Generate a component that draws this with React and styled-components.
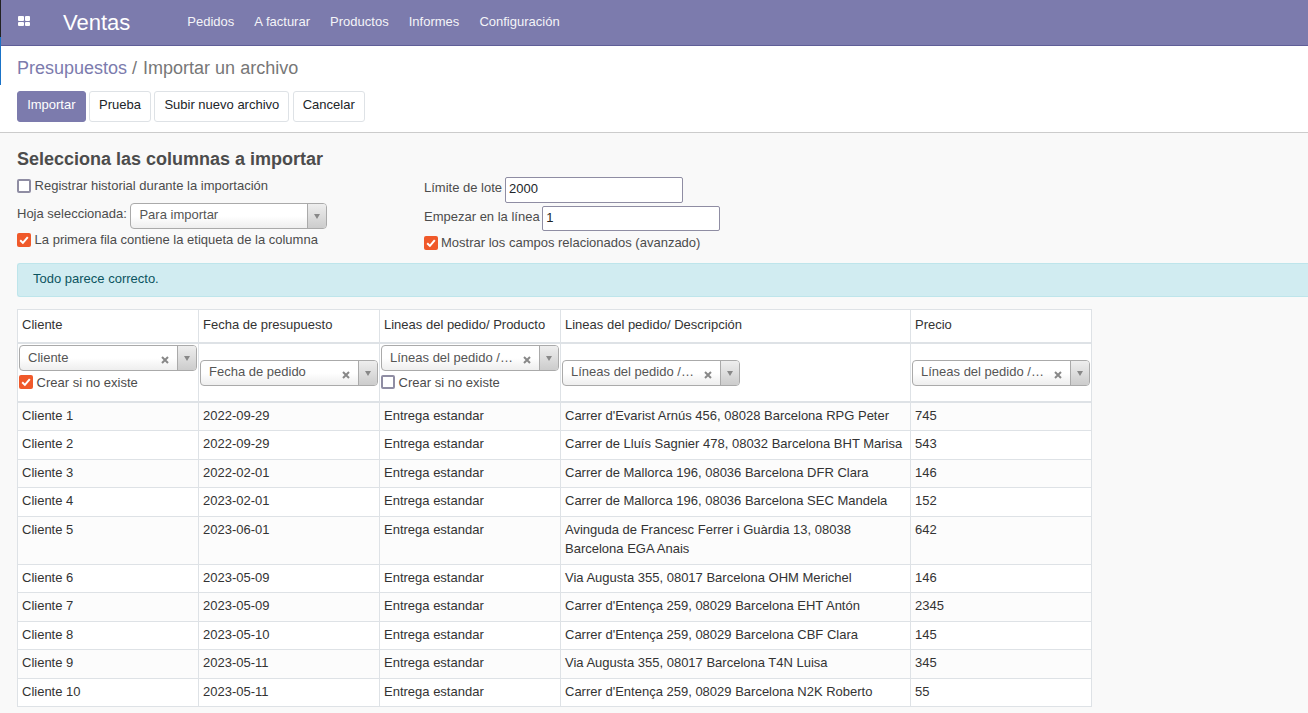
import React from "react";
import styled, { createGlobalStyle, css } from "styled-components";

const Global = createGlobalStyle`
  html, body { margin: 0; padding: 0; height: 100%; overflow: hidden; }
  body { font-family: "Liberation Sans", Roboto, sans-serif; font-size: 13px; line-height: 19.5px; color: #4c4c4c; background: #f9f9f9; }
  #root { height: 100%; }
`;

const Page = styled.div`
  height: 713px; width: 1308px; overflow: hidden; position: relative;
`;
const EdgeMark = styled.div`
  position: absolute; left: 0; top: 37px; width: 1px; height: 48px; background: #1a73c8; z-index: 3;
`;
const EdgeDark = styled.div`
  position: absolute; left: 0; top: 0; width: 1px; height: 37px; background: #222; z-index: 3;
`;
const Navbar = styled.nav`
  height: 45px; background: #7c7bad; border-bottom: 1px solid #5f5e97; display: flex; align-items: center; color: #fff; box-sizing: content-box;
`;
const AppsButton = styled.div`
  width: 12px; height: 10px; margin-left: 18px; display: grid; grid-template-columns: 5.5px 5.5px; grid-auto-rows: 4.5px; gap: 1px; margin-top: -3px;
`;
const AppsCell = styled.span`
  background: #fff; border-radius: 1px;
`;
const Brand = styled.div`
  font-size: 22px; margin-left: 33px; margin-right: 57px; line-height: 43px; color: #fff;
`;
const NavLink = styled.a`
  font-size: 13px; color: #fff; opacity: .92; margin-right: 20.1px; margin-top: -2px;
`;
const ControlPanel = styled.div`
  background: #fff; height: 86px; border-bottom: 1px solid #ccc; padding: 0 17px; display: flex; flex-direction: column;
`;
const Breadcrumb = styled.div`
  font-size: 18px; line-height: 27px; margin-top: 9px; color: #777; display: flex;
`;
const Crumb = styled.span`
  color: ${p => (p.$link ? "#7c7bad" : "#777")};
`;
const CrumbSep = styled.span`
  color: #777; margin: 0 6px 0 5px;
`;
const Buttons = styled.div`
  display: flex; gap: 3.4px; margin-top: 9px;
`;
const Btn = styled.button`
  font: inherit; font-size: 13px; line-height: 19.5px; height: 31px; padding: 0 ${p => (p.$primary ? 9.15 : 9)}px 4px; border-radius: 3px; box-sizing: border-box;
  border: 1px solid ${p => (p.$primary ? "#7c7bad" : "#dee2e6")};
  background: ${p => (p.$primary ? "#7c7bad" : "#fff")};
  color: ${p => (p.$primary ? "#fff" : "#212529")};
`;
const Content = styled.div`
  padding: 0 0 0 17px;
`;
const Title = styled.h2`
  font-size: 18px; line-height: 20px; font-weight: 700; margin: 16px 0 0; color: #4c4c4c;
`;
const Options = styled.div`
  display: flex; height: 94px;
`;
const OptionsLeft = styled.div`
  width: 407px; display: flex; flex-direction: column; padding-top: 7px;
`;
const OptionsRight = styled.div`
  display: flex; flex-direction: column; padding-top: 6px;
`;
const CheckRow = styled.label`
  display: flex; align-items: center; gap: ${p => p.$gap ?? 3.6}px; height: ${p => p.$h || 20}px; color: #4c4c4c;
`;
const Box = styled.span`
  width: 14px; height: 14px; box-sizing: border-box; border-radius: 2px; display: inline-flex; align-items: center; justify-content: center; flex: none;
  border: ${p => (p.$on ? "none" : "2px solid #8f8da3")};
  background: ${p => (p.$on ? "#f0592a" : "#fff")};
`;
const FieldRow = styled.div`
  display: flex; align-items: center; gap: ${p => p.$gap ?? 3.6}px; height: ${p => p.$h}px; margin-top: ${p => p.$mt || 0}px;
`;
const FieldLabel = styled.span`
  padding-bottom: 4px;
`;
const TextInput = styled.input`
  font: inherit; color: #212529; width: 178px; height: ${p => p.$h || 26}px; box-sizing: border-box; border: 1px solid #8f8da3; border-radius: 2px; padding: 0 3px 3px; background: #fff; outline: none; margin: 0;
`;
const Alert = styled.div`
  height: 32px; box-sizing: content-box; background: #d1ecf1; border: 1px solid #bee5eb; border-right: none; border-radius: 3px 0 0 3px; color: #0c5460; line-height: 29px; padding-left: 15px;
`;
const Table = styled.table`
  border-collapse: collapse; margin-top: 12px; width: 1074px; table-layout: fixed; background: #fff; color: #333;
  td, th { border: 1px solid #dee2e6; padding: 3px 4px 5px; font-weight: 400; text-align: left; vertical-align: top; line-height: 19.5px; }
  tbody tr:nth-child(odd) { background: #fcfcfc; }
`;
const HeadCell = styled.th`
  && { height: 23.5px; padding: 3px 4px 5px; vertical-align: middle; border-bottom-width: 2px; }
`;
const Select = styled.div`
  display: flex; height: 26px; box-sizing: border-box; border: 1px solid #aaa; border-radius: 4px; background: linear-gradient(#fff 0%, #fff 50%, #eee 100%); width: ${p => p.$w ? p.$w + "px" : "100%"}; align-items: stretch; color: #4c4c4c; font-size: 13px;
`;
const SelectText = styled.span`
  flex: 1; margin-left: 8px; margin-right: 3px; line-height: 22px; white-space: nowrap; overflow: hidden; text-overflow: ellipsis; min-width: 0; color: #555;
`;
const MapCell = styled.td`
  && {
    height: ${p => (p.$top ? 54.5 : 53)}px; vertical-align: ${p => (p.$top ? "top" : "middle")};
    padding: ${p => (p.$top ? "1.5px 1px 1px" : "3px 1px 1px")}; border-bottom-width: 2px;
  }
  ${p => p.$top && css`${SelectText} { line-height: 24px; }`}
`;
const Clear = styled.span`
  width: 16px; display: flex; align-items: center; justify-content: center; flex: none; padding-top: 4px; margin-right: 2px;
`;
const Arrow = styled.span`
  width: 18px; flex: none; border-left: 1px solid #aaa; border-radius: 0 3px 3px 0; background: linear-gradient(#eee, #ccc); display: flex; align-items: center; justify-content: center; margin-left: 2px;
`;
const Tri = styled.i`
  width: 0; height: 0; border-left: 3px solid transparent; border-right: 3px solid transparent; border-top: 5px solid #888;
`;
const MapCreate = styled.label`
  display: flex; align-items: center; gap: 3.6px; height: 22.5px; color: #4c4c4c;
`;

const Check = ({ on }) => (
  <Box $on={on}>
    {on && (
      <svg width="10" height="10" viewBox="0 0 10 10">
        <path d="M1.2 5.2 L3.9 7.9 L8.8 2.2" fill="none" stroke="#fff" strokeWidth="2" />
      </svg>
    )}
  </Box>
);
const X = () => (
  <svg width="8" height="8" viewBox="0 0 8 8">
    <path d="M1 1 L7 7 M7 1 L1 7" stroke="#888" strokeWidth="2" fill="none" />
  </svg>
);
const FieldSelect = ({ label, clear = true, w }) => (
  <Select $w={w}>
    <SelectText>{label}</SelectText>
    {clear && <Clear><X /></Clear>}
    <Arrow><Tri /></Arrow>
  </Select>
);

const rows = [
  ["Cliente 1", "2022-09-29", "Carrer d'Evarist Arnús 456, 08028 Barcelona RPG Peter", "745"],
  ["Cliente 2", "2022-09-29", "Carrer de Lluís Sagnier 478, 08032 Barcelona BHT Marisa", "543"],
  ["Cliente 3", "2022-02-01", "Carrer de Mallorca 196, 08036 Barcelona DFR Clara", "146"],
  ["Cliente 4", "2023-02-01", "Carrer de Mallorca 196, 08036 Barcelona SEC Mandela", "152"],
  ["Cliente 5", "2023-06-01", "Avinguda de Francesc Ferrer i Guàrdia 13, 08038 Barcelona EGA Anais", "642"],
  ["Cliente 6", "2023-05-09", "Via Augusta 355, 08017 Barcelona OHM Merichel", "146"],
  ["Cliente 7", "2023-05-09", "Carrer d'Entença 259, 08029 Barcelona EHT Antón", "2345"],
  ["Cliente 8", "2023-05-10", "Carrer d'Entença 259, 08029 Barcelona CBF Clara", "145"],
  ["Cliente 9", "2023-05-11", "Via Augusta 355, 08017 Barcelona T4N Luisa", "345"],
  ["Cliente 10", "2023-05-11", "Carrer d'Entença 259, 08029 Barcelona N2K Roberto", "55"],
];

export default function App() {
  return (
    <Page>
      <Global />
      <EdgeDark />
      <EdgeMark />
      <Navbar>
        <AppsButton><AppsCell /><AppsCell /><AppsCell /><AppsCell /></AppsButton>
        <Brand>Ventas</Brand>
        {["Pedidos", "A facturar", "Productos", "Informes", "Configuración"].map(n => <NavLink key={n}>{n}</NavLink>)}
      </Navbar>
      <ControlPanel>
        <Breadcrumb><Crumb $link>Presupuestos</Crumb><CrumbSep>/</CrumbSep><Crumb>Importar un archivo</Crumb></Breadcrumb>
        <Buttons>
          <Btn $primary>Importar</Btn>
          <Btn>Prueba</Btn>
          <Btn>Subir nuevo archivo</Btn>
          <Btn>Cancelar</Btn>
        </Buttons>
      </ControlPanel>
      <Content>
        <Title>Selecciona las columnas a importar</Title>
        <Options>
          <OptionsLeft>
            <CheckRow $h={20}><Check />Registrar historial durante la importación</CheckRow>
            <FieldRow $h={30} $mt={5}><FieldLabel>Hoja seleccionada:</FieldLabel><FieldSelect label="Para importar" clear={false} w={197} /></FieldRow>
            <CheckRow $h={18}><Check on />La primera fila contiene la etiqueta de la columna</CheckRow>
          </OptionsLeft>
          <OptionsRight>
            <FieldRow $h={30} $gap={3}><FieldLabel>Límite de lote</FieldLabel><TextInput defaultValue="2000" /></FieldRow>
            <FieldRow $h={27} $gap={2.5}><FieldLabel>Empezar en la línea</FieldLabel><TextInput $h={25} defaultValue="1" /></FieldRow>
            <CheckRow $h={22} $gap={3}><Check on />Mostrar los campos relacionados (avanzado)</CheckRow>
          </OptionsRight>
        </Options>
        <Alert>Todo parece correcto.</Alert>
        <Table>
          <colgroup>
            <col style={{ width: 181 }} /><col style={{ width: 181 }} /><col style={{ width: 181 }} /><col style={{ width: 350 }} /><col style={{ width: 181 }} />
          </colgroup>
          <thead>
            <tr>
              <HeadCell>Cliente</HeadCell>
              <HeadCell>Fecha de presupuesto</HeadCell>
              <HeadCell>Lineas del pedido/ Producto</HeadCell>
              <HeadCell>Lineas del pedido/ Descripción</HeadCell>
              <HeadCell>Precio</HeadCell>
            </tr>
            <tr>
              <MapCell $top><FieldSelect label="Cliente" /><MapCreate><Check on />Crear si no existe</MapCreate></MapCell>
              <MapCell><FieldSelect label="Fecha de pedido" /></MapCell>
              <MapCell $top><FieldSelect label="Líneas del pedido / Producto" /><MapCreate><Check />Crear si no existe</MapCreate></MapCell>
              <MapCell><FieldSelect label="Líneas del pedido / Descripción" w={178} /></MapCell>
              <MapCell><FieldSelect label="Líneas del pedido / Precio" /></MapCell>
            </tr>
          </thead>
          <tbody>
            {rows.map(r => (
              <tr key={r[0]}>
                <td>{r[0]}</td><td>{r[1]}</td><td>Entrega estandar</td><td>{r[2]}</td><td>{r[3]}</td>
              </tr>
            ))}
          </tbody>
        </Table>
      </Content>
    </Page>
  );
}
